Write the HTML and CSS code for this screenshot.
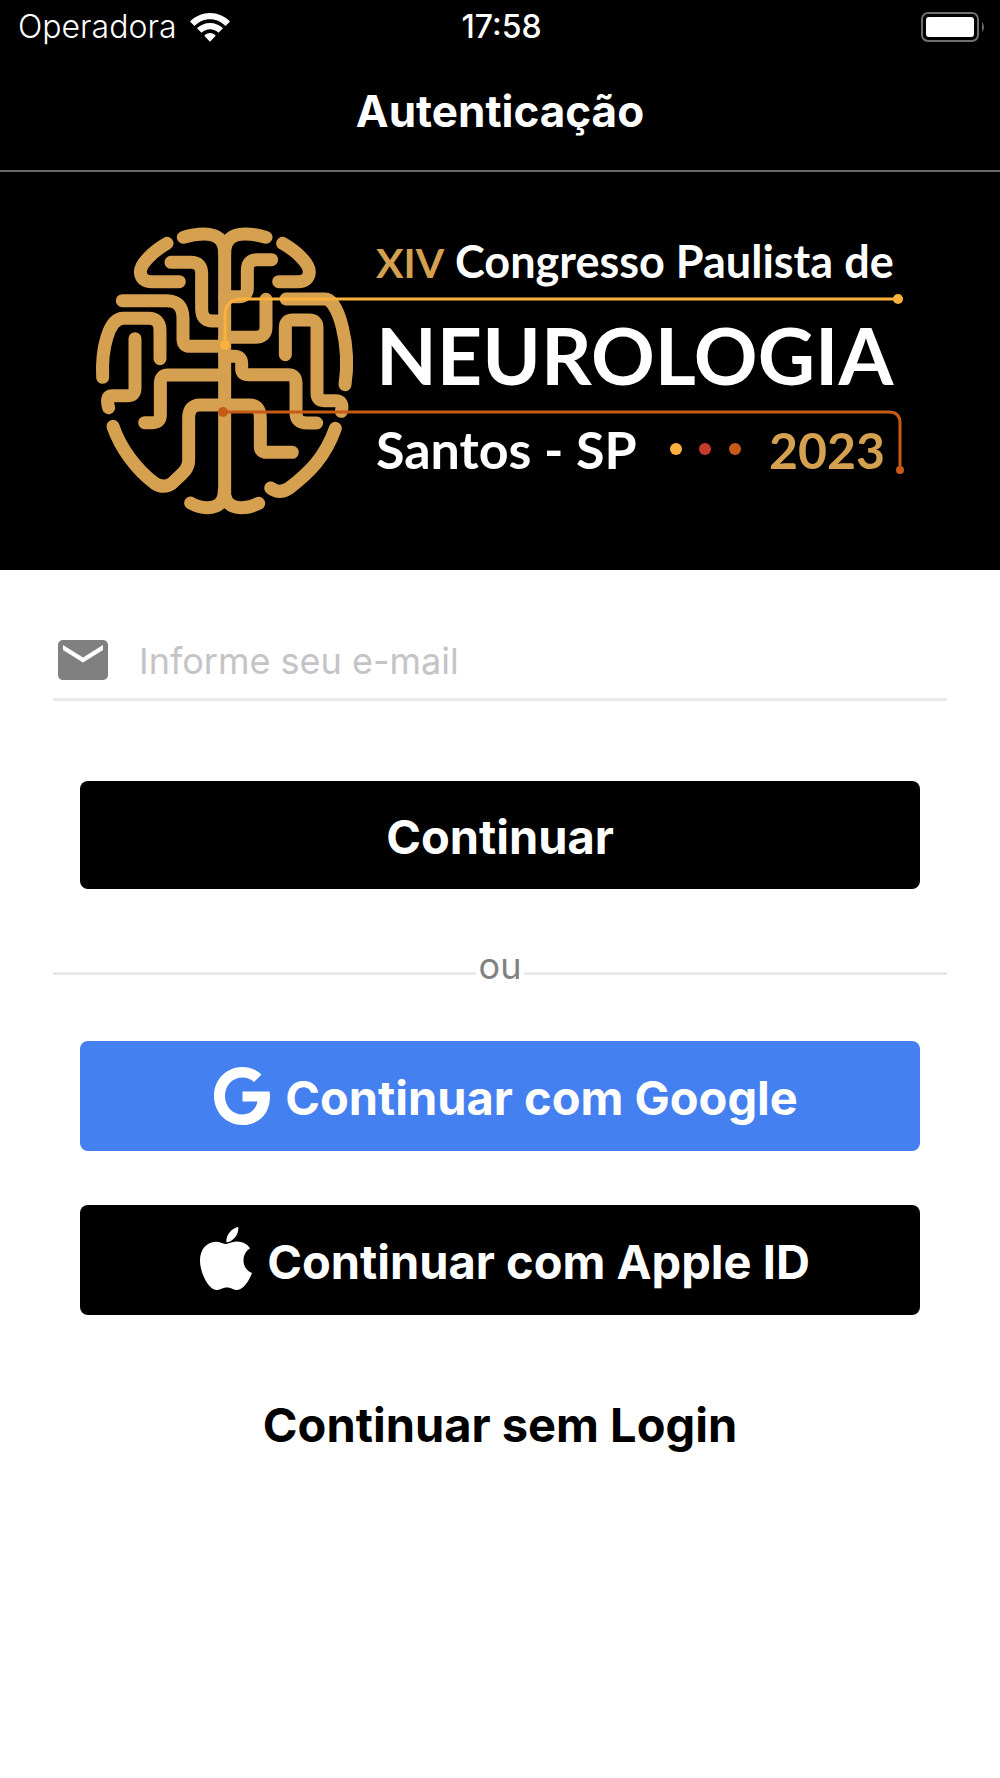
FILE: index.html
```html
<!DOCTYPE html>
<html lang="pt-BR">
<head>
<meta charset="utf-8">
<meta name="viewport" content="width=device-width, initial-scale=1">
<title>Autenticação</title>
<link rel="stylesheet" href="styles.css">
</head>
<body>
<header class="top">
  <div class="status">
    <div class="carrier">
      <span>Operadora</span>
      <svg class="wifi" viewBox="0 0 40 29" aria-hidden="true">
        <path d="M20 0C12.500 0 5.500 3 0 8.500L4.500 13C8.700 8.700 14 6.200 20 6.200S31.300 8.700 35.500 13L40 8.500C34.500 3 27.500 0 20 0Z"/>
        <path d="M20 10C15 10 10.500 12 7 15.300L11.500 19.700C13.800 17.500 16.800 16.200 20 16.200S26.200 17.500 28.500 19.700L33 15.300C29.500 12 25 10 20 10Z"/>
        <path d="M20 20C17.800 20 15.800 21 14.300 22.800L20 28.800L25.700 22.800C24.200 21 22.200 20 20 20Z"/>
      </svg>
    </div>
    <time class="clock">17:58</time>
    <svg class="battery" viewBox="0 0 64 31" aria-hidden="true">
      <rect x="1" y="1" width="56" height="28" rx="6" fill="none" stroke="#6e6e6e" stroke-width="2"/>
      <rect x="5" y="5" width="48" height="20" rx="3" fill="#fff"/>
      <path d="M61 10Q63 12 63 15T61 20Z" fill="#6e6e6e"/>
    </svg>
  </div>
  <h1 class="title">Autenticação</h1>
</header>

<main>
  <section class="hero">
    <svg class="logo" viewBox="0 0 1000 398" role="img" aria-label="XIV Congresso Paulista de Neurologia, Santos - SP, 2023">
      <g class="brain" transform="translate(80 38) scale(.33333)">
        <path d="M434 850V130Q434 72 372 72Q342 72 310 82"/>
        <path d="M434 130Q434 72 494 72Q526 72 558 82"/>
        <path d="M332 879Q356 893 382 893Q433 893 433 840Q433 893 484 893Q512 893 536 880"/>
        <path d="M261 100C222 122 181 160 181 186Q183 215 216 215H298"/>
        <path d="M608 100C648 122 688 160 688 186Q686 215 654 215H596"/>
        <path d="M273 157H332Q365 157 365 190V298Q365 333 398 333H434"/>
        <path d="M575 149H532Q502 149 502 180V235Q502 260 476 260H434"/>
        <path d="M127 272H260Q309 272 309 326V388Q309 409 330 409H434"/>
        <path d="M68 502C64 415 86 325 130 325H205Q240 325 240 360V446"/>
        <path d="M165 386V535Q165 557 143 557H96Q76 557 86 593"/>
        <path d="M434 495H264Q241 495 241 520V615Q241 638 218 638H194"/>
        <path d="M434 585H360Q326 585 326 625V750C326 775 315 784 276 820Q252 837 224 820C170 780 122 716 99 649"/>
        <path d="M434 585H510Q541 585 541 626V710Q541 727 560 727H637"/>
        <path d="M434 439H463Q485 439 485 460V478Q485 494 506 494H625Q648 494 648 520V608Q648 639 680 639H710"/>
        <path d="M434 382H526Q558 382 558 352V268"/>
        <path d="M618 267H735C775 267 813 405 795 524"/>
        <path d="M616 434V352Q616 330 638 330H688Q711 330 711 352V550Q711 572 732 572H766Q792 572 784 604"/>
        <path d="M572 834Q598 854 628 834C690 786 736 740 766 655"/>
      </g>
      <path class="wire wire-yellow" d="M225 173V144Q225 127 242 127H898"/>
      <circle cx="225" cy="173" r="5" fill="#fbb13b"/>
      <circle cx="898" cy="127" r="5" fill="#fbb13b"/>
      <path class="wire wire-orange" d="M223 240H889Q900 240 900 251V298"/>
      <circle cx="223" cy="240" r="5" fill="#c65a17"/>
      <circle cx="900" cy="298" r="4" fill="#c65a17"/>
      <text class="logo-text line-one" x="376" y="106"><tspan class="gold numeral">XIV</tspan> Congresso Paulista de</text>
      <text class="logo-text line-two" x="376" y="213">NEUROLOGIA</text>
      <text class="logo-text line-three" x="376" y="297">Santos - SP</text>
      <circle cx="676" cy="277" r="6" fill="#fbb13b"/>
      <circle cx="705" cy="277" r="6" fill="#c43c2c"/>
      <circle cx="735" cy="277" r="6" fill="#c65a17"/>
      <text class="logo-text year gold" x="885" y="297" text-anchor="end">2023</text>
    </svg>
  </section>

  <form class="login">
    <label class="field">
      <svg class="mail" viewBox="0 0 24 24" aria-hidden="true"><path d="M20 4H4c-1.100 0-2 .9-2 2v12c0 1.100.9 2 2 2h16c1.100 0 2-.9 2-2V6c0-1.100-.9-2-2-2zm0 4l-8 5-8-5V6l8 5 8-5v2z"/></svg>
      <input class="email" type="email" placeholder="Informe seu e-mail" aria-label="Informe seu e-mail">
    </label>
    <button class="btn main-btn" type="submit">Continuar</button>
    <div class="divider"><span>ou</span></div>
    <button class="btn google" type="button">
      <svg class="google-icon" viewBox="0 0 56 58" aria-hidden="true"><path d="M28.500 24.500V34.500H43.500C42 42.500 36 47.500 28.500 47.500C18.500 47.500 11 39.500 11 29S18.500 10.500 28.500 10.500C33 10.500 37 12.200 40 15L47.500 7.500C42.500 2.800 36 0 28.500 0C12.500 0 0 12.500 0 29S12.500 58 28.500 58C45 58 56 46.500 56 29.500Q56 27 55.500 24.500Z"/></svg>
      <span>Continuar com Google</span>
    </button>
    <button class="btn apple" type="button">
      <svg class="apple-icon" viewBox="0 0 52 63" aria-hidden="true"><path d="M43.500 33.500C43.500 27.500 46.500 23.500 50 21.200C47 17 42.500 14.800 37.200 14.600C32.500 14.200 28.500 17 26.200 17C23.700 17 20 14.700 16 14.700C6.500 14.900 0 22.500 0 33.500C0 46 8.500 62.500 16.500 63C20.500 63 22.500 60.500 27 60.500S33 63 37 63C43.500 62.800 49.500 53 52 46C46.500 43.800 43.500 39 43.500 33.500ZM26.300 15.200C26 7.500 32 1 38.300 0C39 7.500 33 15 26.300 15.200Z"/></svg>
      <span>Continuar com Apple ID</span>
    </button>
    <a class="skip" href="#">Continuar sem Login</a>
  </form>
</main>
</body>
</html>
```

FILE: styles.css
```css
* {
  box-sizing: border-box;
}

body {
  margin: 0;
  background: #fff;
  color: #000;
  font-family: Inter, "Liberation Sans", sans-serif;
}

.top {
  background: #000;
  color: #fff;
  border-bottom: 2px solid #6b6b6b;
}

.status {
  display: grid;
  grid-template-columns: 1fr auto 1fr;
  align-items: center;
  height: 54px;
  padding: 0 15px 0 18px;
  font-size: 32px;
  line-height: 40px;
}

.carrier {
  display: flex;
  align-items: center;
  gap: 14px;
  font-weight: 300;
}

.wifi {
  width: 40px;
  height: 29px;
  fill: #fff;
}

.clock {
  font-weight: 500;
}

.battery {
  width: 64px;
  height: 31px;
  justify-self: end;
}

.title {
  margin: 0;
  padding: 29px 16px 31px;
  font-size: 44px;
  line-height: 56px;
  font-weight: 700;
  text-align: center;
}

.hero {
  background: #000;
}

.logo {
  display: block;
  width: 100%;
}

.brain {
  fill: none;
  stroke: #d5a050;
  stroke-width: 39;
  stroke-linecap: round;
  stroke-linejoin: round;
}

.wire {
  fill: none;
  stroke-width: 3;
}

.wire-yellow {
  stroke: #fbb13b;
}

.wire-orange {
  stroke: #c65a17;
}

.logo-text {
  font-family: Lato, "Open Sans", sans-serif;
  font-weight: 700;
  fill: #fff;
}

.line-one {
  font-size: 45px;
}

.numeral {
  font-size: 41px;
}

.line-two {
  font-size: 79px;
}

.line-three {
  font-size: 52px;
}

.year {
  font-size: 50px;
}

.gold,
.logo-text.gold {
  fill: #d5a050;
}

.login {
  display: flex;
  flex-direction: column;
  padding: 56px 53px;
}

.field {
  display: flex;
  align-items: center;
  gap: 26px;
  height: 75px;
  padding-bottom: 4px;
  border-bottom: 3px solid #e9e9e9;
}

.mail {
  flex: none;
  width: 60px;
  height: 60px;
  fill: #808080;
}

.email {
  flex: 1;
  min-width: 0;
  padding: 2px 0 0;
  border: 0;
  outline: 0;
  background: none;
  font: inherit;
  font-size: 36px;
  line-height: 48px;
}

.email::placeholder {
  color: #c4c4c6;
  opacity: 1;
}

.btn {
  display: flex;
  align-items: center;
  justify-content: center;
  height: 110px;
  margin: 0 27px;
  padding: 4px 0 0;
  border: 0;
  border-radius: 8px;
  background: #000;
  color: #fff;
  font: inherit;
  font-size: 47px;
  line-height: 56px;
  font-weight: 700;
}

.main-btn {
  height: 108px;
  margin-top: 80px;
}

.divider {
  display: flex;
  align-items: center;
  gap: 3px;
  margin: 52px 0 50px;
  color: #808080;
  font-size: 36px;
  line-height: 50px;
}

.divider::before,
.divider::after {
  content: "";
  flex: 1;
  height: 3px;
  margin-top: 14px;
  background: #e9e9e9;
}

.google {
  gap: 15px;
  padding-left: 12px;
  background: #4580f0;
}

.google-icon {
  width: 56px;
  height: 58px;
  margin-bottom: 4px;
  fill: #fff;
}

.apple {
  gap: 15px;
  margin-top: 54px;
  padding-left: 10px;
}

.apple-icon {
  width: 52px;
  height: 63px;
  margin-bottom: 8px;
  fill: #fff;
}

.skip {
  align-self: center;
  margin-top: 82px;
  color: #000;
  font-size: 47px;
  line-height: 56px;
  font-weight: 700;
  text-decoration: none;
}
```
